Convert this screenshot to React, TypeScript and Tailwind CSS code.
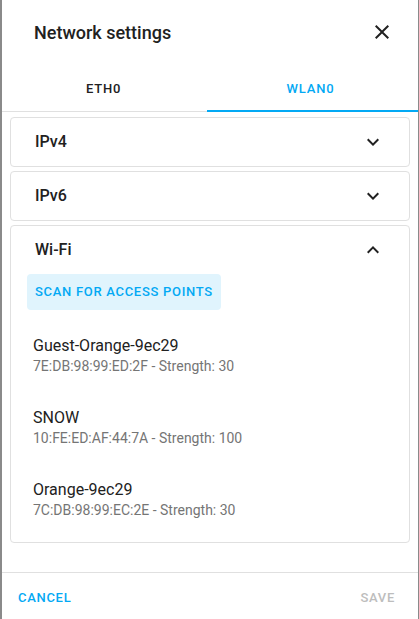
import React from "react";

const close = "M19,6.41L17.59,5L12,10.59L6.41,5L5,6.41L10.59,12L5,17.59L6.41,19L12,13.41L17.59,19L19,17.59L13.41,12L19,6.41Z";
const down = "M7.41,8.58L12,13.17L16.59,8.58L18,10L12,16L6,10L7.41,8.58Z";
const up = "M7.41,15.41L12,10.83L16.59,15.41L18,14L12,8L6,14L7.41,15.41Z";

function Icon({ d }: { d: string }) {
  return (
    <svg width="24" height="24" viewBox="0 0 24 24" className="shrink-0">
      <path d={d} fill="#212121" />
    </svg>
  );
}

function Panel({ title, open, children }: { title: string; open?: boolean; children?: React.ReactNode }) {
  return (
    <div className="mx-[8px] border border-[#e0e0e0] rounded-[4px] bg-white">
      <div className="h-[48px] flex items-center justify-between pl-[24px] pr-[24px]">
        <span className="text-[16px] font-medium text-[#212121]">{title}</span>
        <Icon d={open ? up : down} />
      </div>
      {children}
    </div>
  );
}

const nets = [
  { name: "Guest-Orange-9ec29", sub: "7E:DB:98:99:ED:2F - Strength: 30" },
  { name: "SNOW", sub: "10:FE:ED:AF:44:7A - Strength: 100" },
  { name: "Orange-9ec29", sub: "7C:DB:98:99:EC:2E - Strength: 30" },
];

export default function App() {
  return (
    <div className="w-[419px] h-[619px] bg-[#8a8a8a] overflow-hidden" style={{ fontFamily: "Roboto, 'Liberation Sans', sans-serif" }}>
      <div className="ml-[2px] w-[416px] h-[619px] bg-white flex flex-col">
        <div className="h-[64px] flex items-center justify-between pl-[32px] pr-[24px]">
          <span className="text-[18px] font-medium text-[#212121]">Network settings</span>
          <Icon d={close} />
        </div>
        <div className="h-[48px] flex border-b border-[#e0e0e0]">
          <div className="flex-1 flex items-center justify-center pt-[3px] pr-[4px] text-[13px] font-medium tracking-[0.8px] text-[#212121]">ETH0</div>
          <div className="flex-1 relative flex items-center justify-center pt-[3px] pr-[6px] text-[13px] font-medium tracking-[0.8px] text-[#03a9f4]">
            WLAN0
            <div className="absolute left-[-2px] right-0 bottom-[-1px] h-[2px] bg-[#03a9f4]" />
          </div>
        </div>
        <div className="pt-[5px] flex flex-col gap-[4px]">
          <Panel title="IPv4" />
          <Panel title="IPv6" />
          <Panel title="Wi-Fi" open>
            <div className="pl-[16px]">
              <div className="inline-flex h-[36px] items-center px-[8px] rounded-[4px] bg-[#e0f4fd] text-[13px] font-medium tracking-[0.7px] text-[#03a9f4]">
                SCAN FOR ACCESS POINTS
              </div>
            </div>
            <div className="mt-[10px] pb-[6px]">
              {nets.map((n) => (
                <div key={n.name} className="h-[72px] flex flex-col justify-center pl-[22px]">
                  <div className="text-[16px] leading-[20px] text-[#212121]">{n.name}</div>
                  <div className="text-[14px] leading-[20px] text-[#757575]">{n.sub}</div>
                </div>
              ))}
            </div>
          </Panel>
        </div>
        <div className="mt-[29px] border-t border-[#e0e0e0] pt-[7px] px-[8px] flex justify-between">
          <div className="h-[36px] flex items-center px-[8px] text-[13px] font-medium tracking-[0.7px] text-[#03a9f4]">CANCEL</div>
          <div className="h-[36px] flex items-center px-[15px] text-[13px] font-medium tracking-[0.7px] text-[#bdbdbd]">SAVE</div>
        </div>
      </div>
    </div>
  );
}
